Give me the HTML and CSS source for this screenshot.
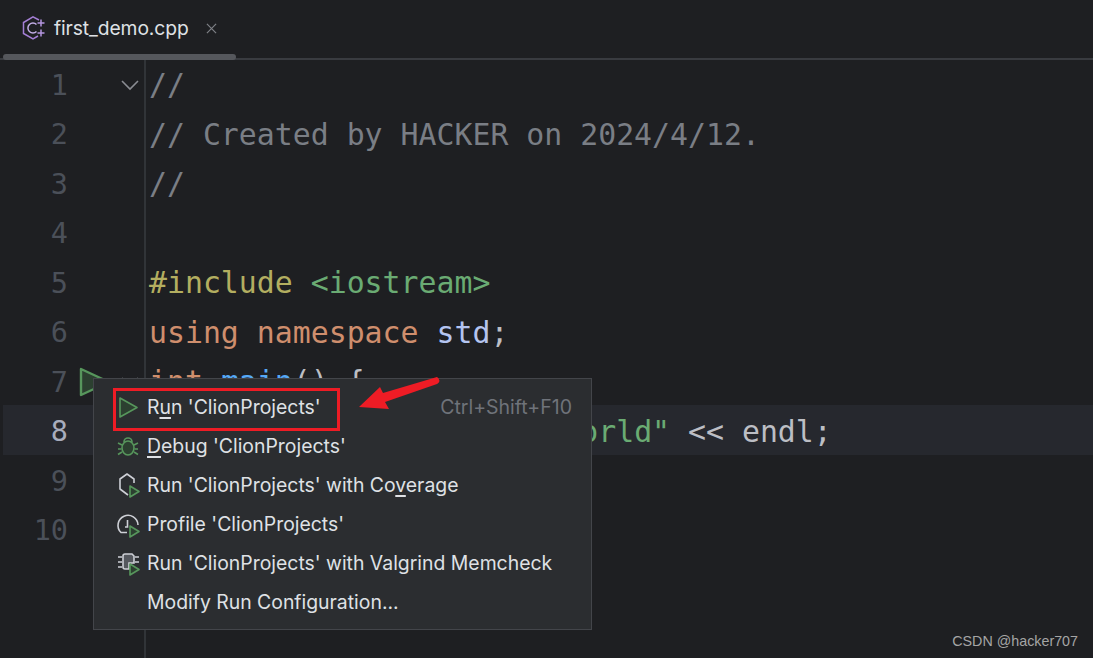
FILE: index.html
```html
<!DOCTYPE html>
<html lang="en">
<head>
<meta charset="utf-8">
<title>first_demo.cpp</title>
<link rel="stylesheet" href="styles.css">
</head>
<body>
<div class="app">
  <header class="tabbar">
    <div class="tab">
      <svg class="tab-icon" viewBox="0 0 24 24" fill="none" stroke="#a57fd6" stroke-width="1.500">
        <path d="M17 4 11 .8 1.500 6.500v11L11 23l5-3"/>
        <path d="M14.500 8.500a5 5 0 1 0 0 7" stroke="#c3aee6"/>
        <path d="M15.500 7h7M19 3.500v7M15.500 17h7M19 13.500v7" stroke="#b596e0"/>
      </svg>
      <span class="tab-name">first_demo.cpp</span>
      <svg class="tab-close" viewBox="0 0 12 12" fill="none" stroke="#7e8086" stroke-width="1.300"><path d="M1 1l10 10M11 1 1 11"/></svg>
    </div>
    <div class="tab-scroll"></div>
  </header>
  <main class="editor">
    <div class="gutter">
      <div class="gline"><span class="num">1</span><span class="mark"></span><svg class="fold" viewBox="0 0 20 12" fill="none" stroke="#8a8c92" stroke-width="1.600"><path d="M2 2l8 8 8-8"/></svg></div>
      <div class="gline"><span class="num">2</span></div>
      <div class="gline"><span class="num">3</span></div>
      <div class="gline"><span class="num">4</span></div>
      <div class="gline"><span class="num">5</span></div>
      <div class="gline"><span class="num">6</span></div>
      <div class="gline"><span class="num">7</span><svg class="mark" viewBox="0 0 34 32" fill="#2c4030" stroke="#57965c" stroke-width="2.400" stroke-linejoin="round"><path d="M3 3l28 13L3 29z"/></svg><svg class="fold" viewBox="0 0 20 12" fill="none" stroke="#8a8c92" stroke-width="1.600"><path d="M2 2l8 8 8-8"/></svg></div>
      <div class="gline current"><span class="num">8</span></div>
      <div class="gline"><span class="num">9</span></div>
      <div class="gline"><span class="num">10</span></div>
    </div>
    <div class="code">
      <div class="cline cm">//</div>
      <div class="cline cm">// Created by HACKER on 2024/4/12.</div>
      <div class="cline cm">//</div>
      <div class="cline"></div>
      <div class="cline"><span class="pp">#include</span> <span class="str">&lt;iostream&gt;</span></div>
      <div class="cline"><span class="kw">using namespace</span> <span class="ns">std</span>;</div>
      <div class="cline"><span class="kw">int</span> <span class="fn">main</span>() {</div>
      <div class="cline current">       cout &lt;&lt; <span class="str">"Hello, World"</span> &lt;&lt; endl;</div>
      <div class="cline">    <span class="kw">return</span> 0;</div>
      <div class="cline">}</div>
    </div>
  </main>
  <div class="menu">
    <div class="item">
      <svg class="ico" viewBox="0 0 22 24" fill="#2c4030" stroke="#57965c" stroke-width="1.600" stroke-linejoin="round"><path d="M3 3l17 9.500L3 22z"/></svg>
      <span>R<u>u</u>n 'ClionProjects'</span><span class="key">Ctrl+Shift+F10</span>
    </div>
    <div class="item">
      <svg class="ico" viewBox="0 0 22 24" fill="#2c4030" stroke="#57965c" stroke-width="1.600"><ellipse cx="11" cy="14" rx="6" ry="7"/><path d="M7 8a4 4 0 0 1 8 0M5 11 1 9M17 11l4-2M4.500 15H1M17.500 15H21M5 18l-4 2.500M17 18l4 2.500" fill="none"/></svg>
      <span><u>D</u>ebug 'ClionProjects'</span>
    </div>
    <div class="item">
      <svg class="ico" viewBox="0 0 22 24" fill="none" stroke-width="1.600"><path d="M11 22l-8-6V6l7-5 7 5v4" stroke="#ced0d6" stroke-linejoin="round"/><path d="M13 13l9 5.500-9 5.500z" fill="#2c4030" stroke="#57965c" stroke-linejoin="round"/></svg>
      <span>Run 'ClionProjects' with Co<u>v</u>erage</span>
    </div>
    <div class="item">
      <svg class="ico" viewBox="0 0 22 24" fill="none" stroke-width="1.600"><path d="M10 20.500H4A10 10 0 1 1 21 13M10.500 8v7H8" stroke="#ced0d6"/><path d="M13 14l9 5.500-9 5.500z" fill="#2c4030" stroke="#57965c" stroke-linejoin="round"/></svg>
      <span>Profile 'ClionProjects'</span>
    </div>
    <div class="item">
      <svg class="ico" viewBox="0 0 22 24" fill="none" stroke-width="1.600"><path d="M8 3h7l2 2v7h-5v6H8a2 2 0 0 1-2-2V5a2 2 0 0 1 2-2z" fill="#55585e" stroke="#ced0d6"/><path d="M1 6h4M1 11h4M1 16h4M18 6h4M18 11h4" stroke="#ced0d6"/><path d="M13 13l9 5.500-9 5.500z" fill="#2c4030" stroke="#57965c" stroke-linejoin="round"/></svg>
      <span>Run 'ClionProjects' with Valgrind Memcheck</span>
    </div>
    <div class="item">
      <span class="ico"></span>
      <span>Modify Run Configuration...</span>
    </div>
  </div>
  <div class="redbox"></div>
  <svg class="arrow" viewBox="355 372 90 45" fill="#ee1c25">
    <path d="M359 407 380 387 383 393 437 377Q439 378 439.500 381 439 383 437 384L385 402 389 409z"/>
  </svg>
  <div class="watermark">CSDN @hacker707</div>
</div>
</body>
</html>
```

FILE: styles.css
```css
* { box-sizing: border-box; }
html, body { margin: 0; padding: 0; height: 100%; background: #1e1f22; overflow: hidden; }

.app {
  position: relative;
  width: 1093px;
  height: 658px;
  display: flex;
  flex-direction: column;
  background: #1e1f22;
  font-family: Inter, "Liberation Sans", sans-serif;
  color: #dfe1e5;
  overflow: hidden;
}

.tabbar {
  height: 60px;
  flex: none;
  display: flex;
  flex-direction: column;
  border-bottom: 2px solid #393b40;
}
.tab {
  flex: 1;
  display: flex;
  align-items: center;
  padding: 2px 0 0 22px;
}
.tab-icon { width: 24px; height: 24px; flex: none; overflow: visible; }
.tab-name { margin-left: 8px; font-size: 19.300px; letter-spacing: -0.1px; color: #dfe1e5; }
.tab-close { width: 11px; height: 11px; margin-left: 17px; flex: none; }
.tab-scroll {
  width: 233px;
  height: 6px;
  margin: 0 0 -2px 3px;
  border-radius: 3px;
  background: #55575c;
}

.editor { flex: 1; display: flex; min-height: 0; }

.gutter {
  width: 146px;
  flex: none;
  border-right: 2px solid #313438;
}
.gline {
  height: 49.5px;
  padding-top: 1px;
  display: flex;
  align-items: center;
  font-family: "DejaVu Sans Mono", monospace;
  font-size: 28.500px;
  color: #4b5059;
}
.gline.current {
  background: #26282e;
  color: #a8adbd;
  margin: -1.500px 0 1.500px 3px;
  padding-top: 4px;
}
.gline.current .num { width: 65px; }
.num { width: 68px; flex: none; text-align: right; }
.mark { width: 34px; height: 32px; margin: -1px 0 0 10px; flex: none; }
.fold { width: 20px; height: 12px; margin: -1px 0 0 8px; flex: none; }

.code {
  flex: 1;
  padding-left: 3px;
  font-family: "DejaVu Sans Mono", monospace;
  font-size: 29.850px;
  color: #bcbec4;
}
.cline { height: 49.5px; line-height: 49.5px; white-space: pre; }
.cline.current {
  background: #26282e;
  margin: -1.500px 0 1.500px -3px;
  padding-left: 3px;
  line-height: 54.5px;
}

.cm { color: #7a7e85; }
.pp { color: #b3ae60; }
.str { color: #6aab73; }
.kw { color: #cf8e6d; }
.ns { color: #b4c4f0; }
.fn { color: #56a8f5; }

.menu {
  position: absolute;
  left: 93px;
  top: 378px;
  width: 499px;
  height: 252px;
  padding: 8px 19px 0 23px;
  background: #2b2d30;
  border: 1px solid #43454a;
  font-size: 19.400px;
  color: #dfe1e5;
}
.item { height: 39px; display: flex; align-items: center; white-space: nowrap; }
.item u { text-underline-offset: 3px; text-decoration-thickness: 1.500px; }
.ico { width: 22px; height: 24px; margin-right: 8px; flex: none; overflow: visible; }
.key { margin-left: auto; color: #6f737a; font-size: 19.500px; }

.redbox {
  position: absolute;
  left: 113px;
  top: 388px;
  width: 227px;
  height: 43px;
  border: 3px solid #ee1c25;
}
.arrow {
  position: absolute;
  left: 355px;
  top: 372px;
  width: 90px;
  height: 45px;
}
.watermark {
  position: absolute;
  right: 15px;
  top: 633px;
  font-family: "Liberation Sans", sans-serif;
  font-size: 14.300px;
  color: #a5a5a5;
}
```
